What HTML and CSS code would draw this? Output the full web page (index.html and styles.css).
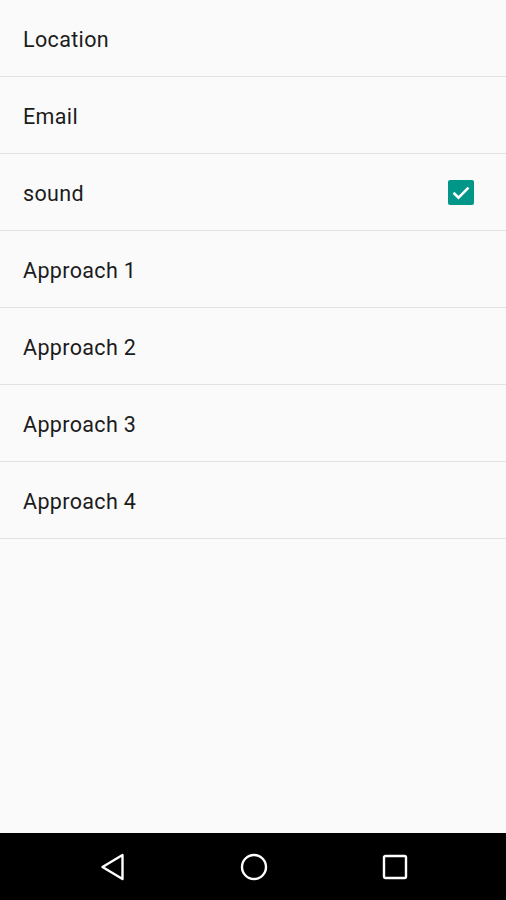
FILE: index.html
```html
<!DOCTYPE html>
<html>
<head>
<meta charset="utf-8">
<link rel="stylesheet" href="styles.css">
</head>
<body>
<div class="screen">
  <ul class="list">
    <li class="row"><span class="label">Location</span></li>
    <li class="row"><span class="label">Email</span></li>
    <li class="row"><span class="label">sound</span>
      <span class="check"><svg width="26" height="25" viewBox="0 0 26 25"><rect x="0" y="0" width="26" height="25" rx="2" fill="#009688"/><path d="M5.5 12.8 L10.5 17.6 L20.5 7.6" fill="none" stroke="#fff" stroke-width="2.6"/></svg></span>
    </li>
    <li class="row"><span class="label">Approach 1</span></li>
    <li class="row"><span class="label">Approach 2</span></li>
    <li class="row"><span class="label">Approach 3</span></li>
    <li class="row"><span class="label">Approach 4</span></li>
  </ul>
  <nav class="navbar">
    <svg class="nav-icon" width="26" height="28" viewBox="0 0 26 28"><path d="M22.5 2 L22.5 26 L2.5 14 Z" fill="none" stroke="#fff" stroke-width="2.4" stroke-linejoin="round"/></svg>
    <svg class="nav-icon" width="28" height="28" viewBox="0 0 28 28"><circle cx="14" cy="14" r="12" fill="none" stroke="#fff" stroke-width="2.4"/></svg>
    <svg class="nav-icon" width="26" height="26" viewBox="0 0 26 26"><rect x="2" y="2" width="22" height="22" rx="1.5" fill="none" stroke="#fff" stroke-width="2.4"/></svg>
  </nav>
</div>
</body>
</html>
```
FILE: styles.css
```css
html, body {
  margin: 0;
  padding: 0;
  background: #fafafa;
}
.screen {
  width: 506px;
  height: 900px;
  display: flex;
  flex-direction: column;
  background: #fafafa;
  font-family: Roboto, "Noto Sans", sans-serif;
}
.list {
  list-style: none;
  margin: 0;
  padding: 0;
  flex: 1;
}
.row {
  height: 76px;
  border-bottom: 1px solid #e2e2e2;
  display: flex;
  align-items: center;
  justify-content: space-between;
  padding: 0 32px 0 23px;
}
.label {
  font-size: 21.5px;
  color: #1c1c1c;
  letter-spacing: 0.35px;
  padding-top: 2px;
}
.check {
  display: flex;
  margin-top: 1px;
}
.navbar {
  height: 67px;
  background: #000;
  display: flex;
  align-items: center;
  padding: 0 98px 0 100px;
  justify-content: space-between;
}
```
